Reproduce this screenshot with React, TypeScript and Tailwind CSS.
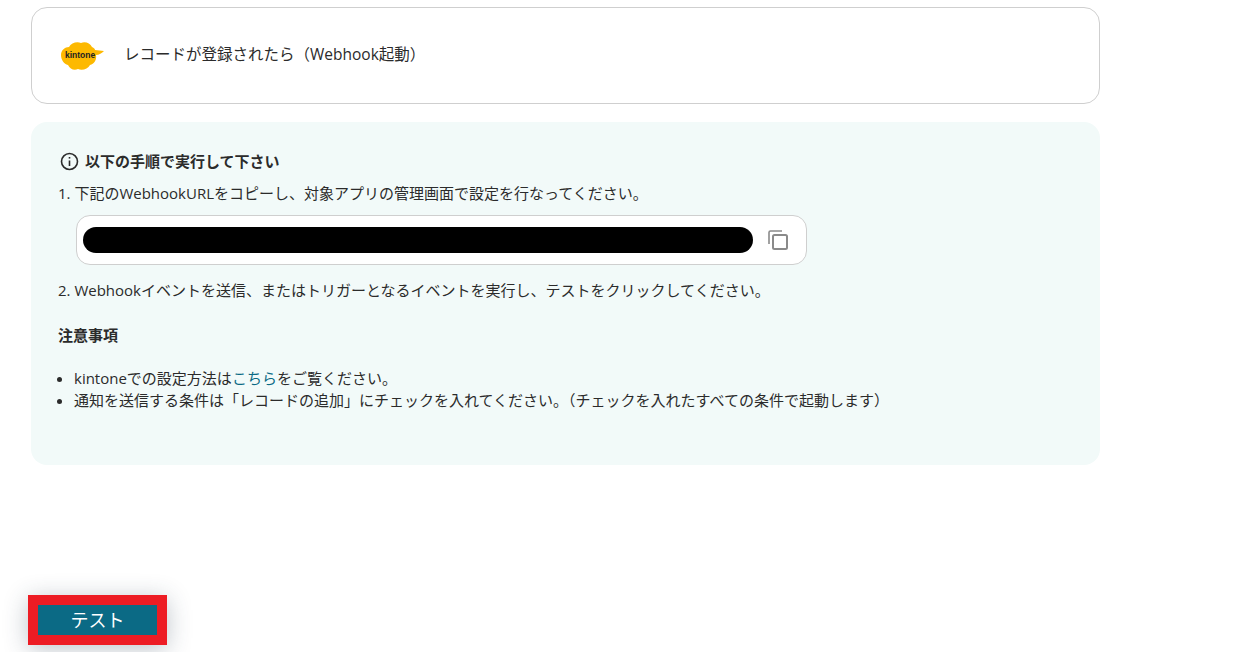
import React from "react";

const font = { fontFamily: '"Open Sans","Noto Sans CJK JP",sans-serif' };

function Logo() {
  return (
    <div className="relative w-[46px] h-[32px] shrink-0">
      <svg width="46" height="32" viewBox="0 0 46 32" className="absolute left-0 top-0">
        <path
          d="M1 15 C1 10 5 7 9 7 C11 3 17 1 21 3 C25 1 30 3 32 7 C34 8 35 9 35 10 L44 11 C42 13 39 15 36 15 C37 20 34 24 30 25 C28 29 22 31 18 29 C14 31 10 29 8 25 C4 24 1 20 1 15 Z"
          fill="#fdb900"
        />
      </svg>
      <span className="absolute left-[5px] top-[9px] text-[8.5px] leading-[12px] font-bold text-[#222] [font-family:'Liberation_Sans',sans-serif]">
        kintone
      </span>
    </div>
  );
}

export default function App() {
  return (
    <div className="w-[1256px] h-[652px] overflow-hidden bg-white flex flex-col text-[#2b2b2b] text-[15px]" style={font}>
      <div className="ml-[31px] mt-[7px] w-[1069px] h-[97px] border border-[#cfcfcf] rounded-[16px] flex items-center pl-[28px] gap-[18px] bg-white">
        <Logo />
        <span className="text-[15.5px] relative top-[-1px]">レコードが登録されたら（Webhook起動）</span>
      </div>

      <div className="ml-[31px] mt-[18px] w-[1069px] h-[343px] rounded-[16px] bg-[#f2faf9] pl-[27px] pt-[28px]">
        <div className="flex items-center gap-[6px] h-[22px] pl-[2px] font-bold text-[15px]">
          <svg width="19" height="19" viewBox="0 0 19 19" fill="none" stroke="#2b2b2b" strokeWidth="1.6">
            <circle cx="9.5" cy="9.5" r="8" />
            <path d="M9.5 8.5 V14" />
            <path d="M9.5 5 V6.6" />
          </svg>
          <span>以下の手順で実行して下さい</span>
        </div>
        <p className="mt-[10px] leading-[22px] text-[15px]">1. 下記のWebhookURLをコピーし、対象アプリの管理画面で設定を行なってください。</p>
        <div className="ml-[18px] mt-[11px] w-[731px] h-[50px] rounded-[14px] border border-[#cfcfcf] bg-white flex items-center pl-[6px] gap-[14px]">
          <div className="w-[670px] h-[26px] rounded-full bg-black" />
          <svg width="22" height="22" viewBox="0 0 22 22" fill="none" stroke="#8a8a8a" strokeWidth="2">
            <path d="M2 15 V3.5 Q2 2 3.5 2 H15" strokeWidth="1.6" />
            <rect x="6" y="6" width="14" height="14" rx="1.5" />
          </svg>
        </div>
        <p className="mt-[14px] leading-[22px] text-[15px]">2. Webhookイベントを送信、またはトリガーとなるイベントを実行し、テストをクリックしてください。</p>
        <p className="mt-[23px] leading-[22px] font-bold text-[15px]">注意事項</p>
        <ul className="mt-[21px] list-disc pl-[16px] leading-[22px] text-[15px]">
          <li>
            kintoneでの設定方法は<span className="text-[#0b6a85]">こちら</span>をご覧ください。
          </li>
          <li>通知を送信する条件は「レコードの追加」にチェックを入れてください。（チェックを入れたすべての条件で起動します）</li>
        </ul>
      </div>

      <div className="ml-[28px] mt-[130px] w-[139px] h-[50px] border-[10px] border-[#ed1c24] bg-[#0b6a85] shadow-[0_4px_24px_rgba(40,60,80,0.3)] flex items-center justify-center">
        <span className="text-white text-[18px]">テスト</span>
      </div>
    </div>
  );
}
